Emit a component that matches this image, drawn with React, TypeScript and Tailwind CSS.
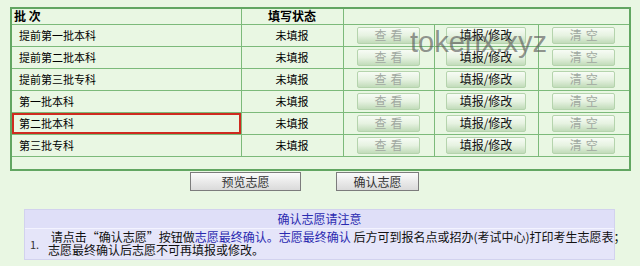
const rows = ["提前第一批本科", "提前第二批本科", "提前第三批专科", "第一批本科", "第二批本科", "第三批专科"];

function GreenBtn({ label, active }: { label: string; active?: boolean }) {
  return (
    <div
      className={`mx-auto flex h-[17px] items-center justify-center rounded-[2px] border border-[#b5d4ad] bg-gradient-to-b from-[#f7fcf5] via-[#e6f2e1] to-[#c2dcba] text-[12px] leading-none ${
        active ? "w-[80px] text-[#111]" : "w-[63px] text-[#a0a8a0] tracking-[4px] pl-[4px]"
      }`}
    >
      {label}
    </div>
  );
}

export default function App() {
  return (
    <div className="relative h-[266px] w-[640px] overflow-hidden bg-[#e9f7e3] font-['Noto_Sans_CJK_SC',sans-serif] text-black">
      <div className="pl-[10px] pt-[7px]">
        <table className="w-[619px] table-fixed border-collapse border-2 border-[#62a662]">
          <colgroup>
            <col className="w-[230px]" />
            <col className="w-[102px]" />
            <col className="w-[91px]" />
            <col className="w-[104px]" />
            <col className="w-[92px]" />
          </colgroup>
          <tbody>
            <tr className="h-[16px]">
              <td className="border border-[#7cba7a] pl-[2px] text-[12px] font-bold leading-none">批 次</td>
              <td className="border border-[#7cba7a] text-center text-[12px] font-bold leading-none">填写状态</td>
              <td colSpan={3} className="border border-[#7cba7a]"></td>
            </tr>
            {rows.map((r, i) => (
              <tr key={r} className="h-[22px]">
                <td
                  className={`border border-[#7cba7a] pl-[7px] text-[11px] leading-none ${
                    i === 4 ? "shadow-[inset_0_0_0_2px_#cf2a1f]" : ""
                  }`}
                >
                  {r}
                </td>
                <td className="border border-[#7cba7a] text-center text-[11px] leading-none">未填报</td>
                <td className="border border-[#7cba7a]">
                  <GreenBtn label="查看" />
                </td>
                <td className="border border-[#7cba7a]">
                  <GreenBtn label="填报/修改" active />
                </td>
                <td className="border border-[#7cba7a]">
                  <GreenBtn label="清空" />
                </td>
              </tr>
            ))}
            <tr className="h-[14px]">
              <td colSpan={5} className="border border-[#7cba7a]"></td>
            </tr>
          </tbody>
        </table>
      </div>

      <div className="mt-[1px] flex pl-[190px]">
        <div className="flex h-[19px] w-[111px] items-center justify-center border border-[#7c7c7c] bg-gradient-to-b from-[#fbfbfb] to-[#dadada] text-[12px] leading-none text-[#333]">
          预览志愿
        </div>
        <div className="ml-[35px] flex h-[19px] w-[83px] items-center justify-center border border-[#7c7c7c] bg-gradient-to-b from-[#fbfbfb] to-[#dadada] text-[12px] leading-none text-[#333]">
          确认志愿
        </div>
      </div>

      <div className="ml-[24px] mt-[18px] w-[591px] border border-[#d2d2ee] bg-[#e5e5f9] text-[12px]">
        <div className="flex h-[18px] items-center justify-center bg-[#dfdff8] leading-none text-[#2a2ab0]">
          确认志愿请注意
        </div>
        <div className="flex h-[31px] border-t border-[#f3f3ff]">
          <div className="flex w-[23px] shrink-0 items-center pl-[5px] text-[11px] text-[#333]">1.</div>
          <div className="pt-[1px] leading-[13px] text-[#111]">
            <span className="whitespace-nowrap">
              {"\u00a0"}请点击“确认志愿”按钮做<span className="text-[#2a2ab0]">志愿最终确认。志愿最终确认</span> 后方可到报名点或招办(考试中心)打印考生志愿表；
            </span>
            <br />
            志愿最终确认后志愿不可再填报或修改。
          </div>
        </div>
      </div>

      <div className="pointer-events-none absolute left-[410px] top-[28px] font-['Liberation_Sans',sans-serif] text-[29px] leading-none text-[#5a5a5a]/65">
        tokenx.xyz
      </div>
    </div>
  );
}
